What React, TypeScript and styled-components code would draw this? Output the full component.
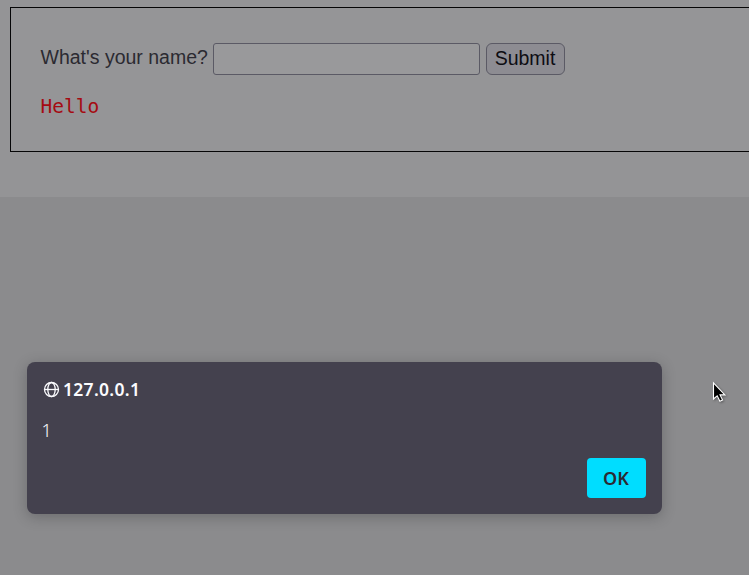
import React from 'react';
import styled, { createGlobalStyle } from 'styled-components';

const GlobalStyle = createGlobalStyle`
  * { box-sizing: border-box; }
  body { margin: 0; overflow: hidden; background: #8b8b8d; }
`;

const Page = styled.div`
  position: relative;
  width: 749px;
  height: 575px;
  overflow: hidden;
  background: #8b8b8d;
  font-family: 'Liberation Sans', Arial, sans-serif;
`;

const Content = styled.main`
  height: 197px;
  padding: 7px 0 0 10px;
  background: #949496;
`;

const Panel = styled.section`
  width: 760px;
  height: 145px;
  padding: 35px 29px 0;
  border: 1px solid #060607;
  background: #959597;
`;

const Form = styled.form`
  display: flex;
  align-items: flex-start;
`;

const Label = styled.label`
  width: 173px;
  padding-left: 0.5px;
  color: #2b2a31;
  font-size: 19.5px;
  line-height: 29px;
  white-space: nowrap;
`;

const Field = styled.input`
  width: 267px;
  height: 32px;
  margin: 0 6px 0 0;
  padding: 0 6px;
  border: 1px solid #5b5a65;
  border-radius: 3px;
  outline: none;
  background: #99999b;
  font-size: 19.5px;
`;

const Submit = styled.button`
  width: 79px;
  height: 32px;
  padding: 0 1px 1px 0;
  border: 1px solid #5b5a65;
  border-radius: 6px;
  background: #8d8c92;
  color: #0d0d12;
  font: 19.5px 'Liberation Sans', Arial, sans-serif;
`;

const Result = styled.pre`
  margin: 18px 0 0 0.5px;
  color: #a50b12;
  font: 19.5px/28px 'DejaVu Sans Mono', monospace;
`;

const Dialog = styled.div`
  position: absolute;
  left: 27px;
  top: 362px;
  display: flex;
  flex-direction: column;
  width: 635px;
  height: 152px;
  padding: 15px 16px 16px 15px;
  border-radius: 8px;
  background: #44414e;
  box-shadow: 0 3px 14px rgba(20, 20, 25, 0.26);
  color: #fbfbfe;
  font-family: 'Noto Sans', sans-serif;
`;

const Origin = styled.header`
  display: flex;
  align-items: center;
  gap: 3px;
  height: 24px;
  padding-left: 1px;
  font-size: 17.5px;
  font-weight: 600;
  letter-spacing: 0.3px;
`;

const Message = styled.p`
  margin: 17px 0 0 -0.5px;
  font-size: 18px;
  font-weight: 300;
  line-height: 24px;
`;

const Confirm = styled.button`
  align-self: flex-end;
  width: 59px;
  height: 40px;
  margin-top: auto;
  padding: 0 1px 0 0;
  border: 0;
  border-radius: 4px;
  background: #00ddff;
  color: #2b2a33;
  font: 600 18px 'Noto Sans', sans-serif;
`;

const Pointer = styled.svg`
  position: absolute;
  left: 711px;
  top: 380px;
  filter: drop-shadow(1px 1px 1px rgba(0, 0, 0, 0.35));
`;

const Globe = () => (
  <svg width="17" height="18" viewBox="0 0 17 18" fill="none" stroke="#fbfbfe" strokeWidth="1.3">
    <circle cx="8.5" cy="9.5" r="7" />
    <ellipse cx="8.5" cy="9.5" rx="3.7" ry="7" />
    <path d="M1.5 9.5h14" />
  </svg>
);

export default function App() {
  return (
    <>
      <GlobalStyle />
      <Page>
        <Content>
          <Panel>
            <Form onSubmit={(e) => e.preventDefault()}>
              <Label htmlFor="name">What's your name?</Label>
              <Field id="name" />
              <Submit>Submit</Submit>
            </Form>
            <Result>Hello</Result>
          </Panel>
        </Content>
        <Dialog role="alertdialog">
          <Origin>
            <Globe />
            127.0.0.1
          </Origin>
          <Message>1</Message>
          <Confirm>OK</Confirm>
        </Dialog>
        <Pointer width="17" height="24" viewBox="0 0 17 24">
          <path
            d="M2.5 2.8v16.2l3.7-3.2 2.7 5.5 2.7-1.3-2.6-5.1h4.9z"
            fill="#000"
            stroke="#fff"
            strokeWidth="1.1"
          />
        </Pointer>
      </Page>
    </>
  );
}
